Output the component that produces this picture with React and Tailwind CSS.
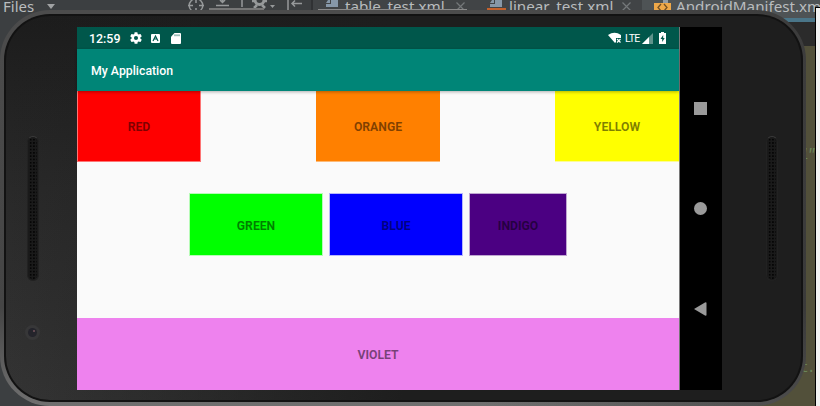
import React from "react";

function Speaker({ className = "" }) {
  return (
    <div className={`h-[145px] w-[12px] rounded-full border border-[#222] border-t-[#3b3b3b] bg-[#1a1a1a] p-[1px] ${className}`}>
      <div className="h-full w-full rounded-full bg-[radial-gradient(circle_at_center,#050505_0.7px,transparent_1.1px)] bg-[size:3.3px_3.3px]" />
    </div>
  );
}

function Block({ label, className }) {
  return (
    <div className={`flex shrink-0 items-center justify-center text-[12.2px] font-bold leading-none text-black/50 ${className}`}>
      <span className="pt-[3px]">{label}</span>
    </div>
  );
}

function XmlIcon({ badge = true }) {
  return (
    <svg width="19" height="12" viewBox="0 0 19 12" className="shrink-0">
      <path d="M5 0h2v3H3z M8 0h7v7H3V4h5z" fill="#8798a8" />
      {badge && (
        <>
          <path d="M0 8h19v4H0z" fill="#c4622d" />
          <path d="M6 12l2-2M10 12l2-2" stroke="#6b3217" />
        </>
      )}
    </svg>
  );
}

function CloseIcon() {
  return (
    <svg width="9" height="9" viewBox="0 0 9 9" className="shrink-0">
      <path d="M0.5 0.5l8 8M8.5 0.5l-8 8" stroke="#74787a" strokeWidth="1.2" />
    </svg>
  );
}

function Ide() {
  return (
    <div className="flex h-full w-full flex-col bg-[#3c3f41] font-['Noto_Sans',sans-serif] text-[15px] text-[#b9bcbe]">
      <div className="flex h-[18px] shrink-0">
        <div className="flex w-[311px] shrink-0 items-start">
          <span className="ml-[3px] mt-[-4px] w-[34px] text-[15px] leading-[20px]">Files</span>
          <svg width="10" height="10" className="ml-[9px]"><path d="M1 4h8L5 9z" fill="#a0a2a3" /></svg>
          <svg width="115" height="12" viewBox="187 0 115 12" className="ml-[131px]" fill="none" stroke="#96999a" strokeWidth="1.5">
            <circle cx="196" cy="5.500" r="6.800" />
            <path d="M196-2v5M196 8v5M188 5.500h5M199 5.500h5M216 5.500h13M222.500 0v2.500M220 0l2.500 2.500L225 0M242 0v7" />
            <path d="M255 0a4.500 4.500 0 009 0" strokeWidth="3" />
            <path d="M254 8l3-3M265 8l-3-3M252 1h3M264 1h3" strokeWidth="2.500" />
            <path d="M270 5h5l-2.500 3z" fill="#96999a" stroke="none" />
            <path d="M288 0v10M292 3.500h10M295 .5l-3 3 3 3" />
          </svg>
        </div>
        <div className="flex w-[164px] shrink-0 border-l-2 border-[#303234] bg-[#414446]">
          <div className="ml-[10px]"><XmlIcon badge={false} /></div>
          <span className="ml-[3px] mt-[-4px] w-[103px] whitespace-nowrap text-[15.2px] leading-[20px]">table_test.xml</span>
          <div className="ml-[8px] mt-[2px]"><CloseIcon /></div>
        </div>
        <div className="flex w-[167px] shrink-0 bg-[#414446]">
          <div className="ml-[12px]"><XmlIcon /></div>
          <span className="ml-[3px] mt-[-4px] w-[103px] whitespace-nowrap text-[15.2px] leading-[20px]">linear_test.xml</span>
          <div className="ml-[10px] mt-[2px]"><CloseIcon /></div>
        </div>
        <div className="flex min-w-0 flex-1 bg-[#4e5355]">
          <svg width="17" height="12" viewBox="0 0 17 12" className="ml-[12px] shrink-0">
            <path d="M9 0h5v3H9z" fill="#929ca5" />
            <path d="M0 3h17v9H0z" fill="#eea849" />
            <path d="M7 4L4 7.500 7 11M10 4l3 3.500-3 3.500" stroke="#725026" strokeWidth="1.300" fill="none" />
          </svg>
          <span className="ml-[5px] mt-[-4px] whitespace-nowrap text-[15.2px] leading-[20px]">AndroidManifest.xml</span>
        </div>
      </div>
      <div className="flex min-h-0 flex-1 justify-end">
        <div className="flex w-[180px] flex-col">
          <div className="h-[4px] bg-[#4a7588]" />
          <div className="h-[24px] bg-[#2b2b2b]" />
          <div className="flex flex-1 flex-col items-end bg-[#52503a] pr-[6px] font-['Liberation_Mono',monospace] text-[14px] tracking-[-1.5px] text-[#6a8759]">
            <span className="mt-[99px] h-[20px] italic leading-[20px]">l"</span>
            <span className="mt-[193px] h-[20px] leading-[20px]">t.</span>
          </div>
        </div>
      </div>
    </div>
  );
}

function StatusBar() {
  return (
    <div className="flex h-[22px] shrink-0 items-center bg-[#00574b] text-white">
      <span className="ml-[12px] w-[32px] pt-[2px] text-[12.4px] font-medium leading-none">12:59</span>
      <svg width="14" height="14" viewBox="0 0 24 24" fill="#fff" className="ml-[8px]">
        <path d="M19.430 12.980c.04-.32.07-.64.07-.98s-.03-.66-.07-.98l2.110-1.650c.19-.15.24-.42.12-.64l-2-3.460c-.12-.22-.39-.3-.61-.22l-2.490 1c-.52-.4-1.080-.73-1.690-.98l-.38-2.650A.5.5 0 0014 2h-4c-.25 0-.46.18-.49.42l-.38 2.650c-.61.25-1.170.59-1.690.98l-2.490-1c-.23-.09-.49 0-.61.22l-2 3.460c-.13.22-.07.49.12.64l2.110 1.650c-.04.32-.07.65-.07.98s.03.66.07.98l-2.110 1.650c-.19.15-.24.42-.12.64l2 3.460c.12.22.39.3.61.22l2.490-1c.52.4 1.080.73 1.690.98l.38 2.650c.03.24.24.42.49.42h4c.25 0 .46-.18.49-.42l.38-2.650c.61-.25 1.170-.59 1.690-.98l2.490 1c.23.09.49 0 .61-.22l2-3.460c.12-.22.07-.49-.12-.64zM12 15.500a3.500 3.500 0 110-7 3.500 3.500 0 010 7z" />
      </svg>
      <svg width="9" height="9" viewBox="0 0 9 9" className="ml-[8px]">
        <rect width="9" height="9" rx="1" fill="#fff" />
        <path d="M2 7l2.500-5L7 7M3 5h3" stroke="#00574b" strokeWidth="1.200" fill="none" />
      </svg>
      <svg width="10" height="11" viewBox="0 0 10 12" preserveAspectRatio="none" className="ml-[11px]">
        <path d="M3.500 0H9q1 0 1 1v10q0 1-1 1H1q-1 0-1-1V4z" fill="#fff" />
        <path d="M4 1.500v2M6 1.500v2M8 1.500v2" stroke="#00574b" strokeWidth=".8" />
      </svg>
      <div className="ml-auto mr-[12px] flex items-center">
        <svg width="14" height="12" viewBox="0 0 14 12">
          <path d="M0 3Q6.500-1.500 13 3v3H8v4L7 11z" fill="#fff" />
          <path d="M9 7l3.500 3.500M12.500 7L9 10.500" stroke="#fff" strokeWidth="1.200" />
        </svg>
        <span className="ml-[3px] w-[15px] whitespace-nowrap pt-[2px] text-[10.5px] leading-none tracking-[-0.6px]">LTE</span>
        <svg width="11" height="11" viewBox="0 0 11 11" className="ml-[2px]">
          <path d="M0 11L11 0v11z" fill="#5f938b" />
          <path d="M0 11l7-7v7z" fill="#fff" />
        </svg>
        <svg width="7" height="12" viewBox="0 0 7 12" className="ml-[6px] mr-[1px]">
          <path d="M2 0h3v1h2v11H0V1h2z" fill="#fff" />
          <path d="M4.200 3L1.500 7h1.700v3L5.700 6H4.200z" fill="#00574b" />
        </svg>
      </div>
    </div>
  );
}

function Screen() {
  return (
    <div className="flex h-[363px] w-[603px] shrink-0 flex-col border-r border-[#777] bg-[#fafafa]">
      <StatusBar />
      <div className="z-10 flex h-[42px] shrink-0 items-center bg-[#008577] pl-[14px] pt-[2px] text-[12.3px] font-medium leading-none text-white shadow-[0_1px_3px_rgba(0,0,0,0.3)]">
        My Application
      </div>
      <div className="flex h-[70px] shrink-0 justify-between pl-[1px]">
        <Block label="RED" className="w-[122px] bg-[#ff0000] shadow-[0_0_0_1px_#ff000088]" />
        <Block label="ORANGE" className="ml-[-7px] mr-[-8px] w-[124px] bg-[#ff8000] shadow-[0_1px_0_0_#ff800088]" />
        <Block label="YELLOW" className="w-[124px] bg-[#ffff00] shadow-[0_1px_0_0_#ffff0066]" />
      </div>
      <div className="ml-[113px] mt-[33px] flex h-[61px] shrink-0 gap-[8px]">
        <Block label="GREEN" className="w-[132px] bg-[#00ff00] shadow-[0_0_0_1px_#00ff0044]" />
        <Block label="BLUE" className="w-[132px] bg-[#0000ff] shadow-[0_0_0_1px_#0000ff44]" />
        <Block label="INDIGO" className="w-[96px] bg-[#4b0082] shadow-[0_0_0_1px_#4b008255]" />
      </div>
      <div className="mt-auto flex h-[72px]">
        <Block label="VIOLET" className="w-full bg-[#ee82ee]" />
      </div>
    </div>
  );
}

function Phone() {
  return (
    <div className="h-[396px] w-[806px] rounded-[50px] bg-[linear-gradient(to_right,transparent_60%,#33333399_98%),linear-gradient(to_bottom,#4c4c4c_0%,#454545_75%,#707070_100%)] pb-[4px] pl-[4px] pr-[3px] pt-[4px]">
      <div className="h-full w-full rounded-[46px] bg-[#121212] pb-[2px] pl-[2px] pr-[2px] pt-[2px]">
        <div className="flex h-full w-full rounded-[44px] bg-[linear-gradient(to_right,transparent_0%,#1e1e1e_50%),linear-gradient(to_bottom,#1c1c1c_0%,#292929_45%,#343434_100%)] pt-[11px]">
          <div className="flex w-[71px] shrink-0 flex-col items-start">
            <Speaker className="ml-[21px] mt-[109px]" />
            <div className="ml-[19px] mt-[44px] flex h-[15px] w-[15px] items-center justify-center rounded-full bg-[#373738]">
              <div className="flex h-[9px] w-[9px] justify-end rounded-full bg-[#24242b] pr-[2px] pt-[2px]">
                <div className="h-[2px] w-[2px] rounded-full bg-[#76545e]" />
              </div>
            </div>
          </div>
          <Screen />
          <div className="flex h-[363px] w-[42px] shrink-0 flex-col items-center bg-black">
            <div className="ml-[-1px] mt-[75px] h-[13px] w-[13px] bg-[#9a9a9a]" />
            <div className="ml-[-1px] mt-[87px] h-[13px] w-[13px] rounded-full bg-[#9a9a9a]" />
            <svg width="13" height="14" viewBox="0 0 13 14" className="ml-[-2px] mt-[87px]">
              <path d="M0 7L11 0.500Q12.500 0 12.500 1v12q0 1-1.500.5z" fill="#9a9a9a" />
            </svg>
          </div>
          <Speaker className="ml-[44px] mt-[109px] shrink-0" />
        </div>
      </div>
    </div>
  );
}

export default function App() {
  return (
    <div className="relative h-[406px] w-[820px] overflow-hidden bg-[#3c3f41] font-[Roboto,sans-serif]">
      <Ide />
      <div className="absolute left-0 top-[10px]">
        <Phone />
      </div>
      <div className="absolute left-[209px] top-[8px] h-[2px] w-[55px] bg-[#777]" />
      <div className="absolute left-[318px] top-[9px] h-px w-[149px] bg-[#8a8a8a]" />
      <div className="absolute left-[815px] top-[7px] h-[399px] w-[5px] border-l border-t border-black bg-[#f2f2f2]" />
    </div>
  );
}
